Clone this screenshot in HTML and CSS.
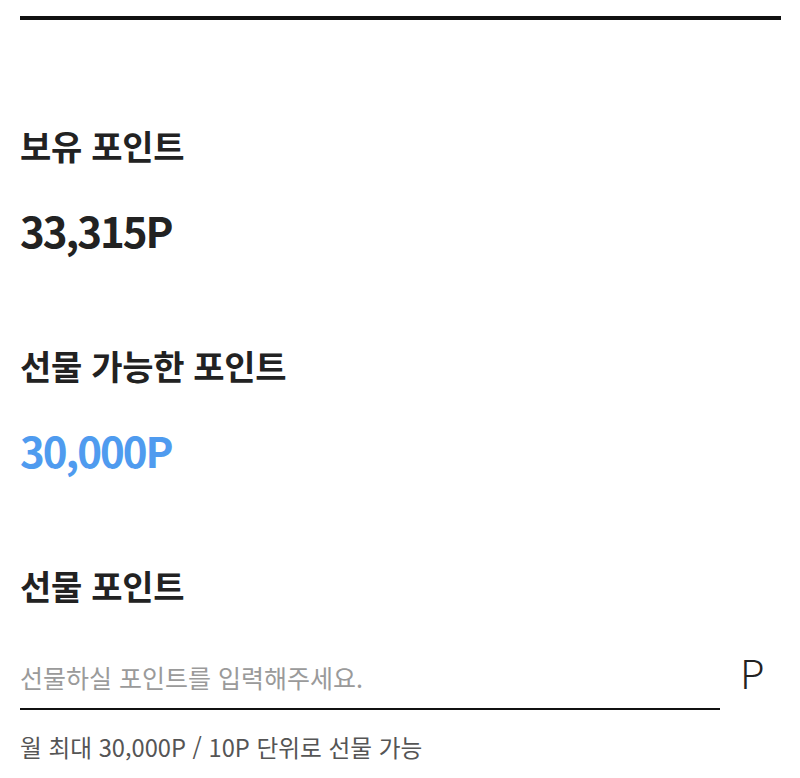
FILE: index.html
```html
<!DOCTYPE html>
<html lang="ko">
<head>
<meta charset="utf-8">
<link rel="stylesheet" href="styles.css">
</head>
<body>
<div class="page">
  <div class="top-rule"></div>
  <h2 class="label label-first">보유 포인트</h2>
  <div class="amount">33,315P</div>
  <h2 class="label">선물 가능한 포인트</h2>
  <div class="amount amount-blue">30,000P</div>
  <h2 class="label">선물 포인트</h2>
  <div class="input-row">
    <div class="field">
      <input class="field-input" type="text" placeholder="선물하실 포인트를 입력해주세요.">
    </div>
    <span class="unit">P</span>
  </div>
  <p class="hint">월 최대 30,000P / 10P 단위로 선물 가능</p>
</div>
</body>
</html>
```
FILE: styles.css
```css
html, body {
  margin: 0;
  padding: 0;
  background: #ffffff;
}
body {
  font-family: "Noto Sans CJK KR", "Noto Sans", sans-serif;
  color: #222222;
}
.page {
  padding: 16px 19px 0 20px;
}
.top-rule {
  height: 4px;
  background: #111111;
}
.label {
  margin: 92px 0 0;
  font-size: 34px;
  line-height: 40px;
  font-weight: 700;
  color: #222222;
  letter-spacing: -0.3px;
}
.label-first {
  margin-top: 106px;
}
.amount {
  margin-top: 40px;
  font-size: 42px;
  line-height: 48px;
  font-weight: 700;
  color: #222222;
  letter-spacing: -2px;
}
.amount-blue {
  color: #4f9bef;
}
.input-row {
  margin-top: 50px;
  display: flex;
  align-items: flex-start;
}
.field {
  flex: 0 0 700px;
  border-bottom: 2px solid #111111;
}
.field-input {
  display: block;
  width: 100%;
  height: 52px;
  box-sizing: border-box;
  border: 0;
  outline: none;
  padding: 0 0 10px;
  background: transparent;
  font-family: "Noto Sans CJK KR", "Noto Sans", sans-serif;
  font-size: 25px;
  color: #222222;
}
.field-input::placeholder {
  color: #9a9a9a;
}
.unit {
  margin: 2px 0 0 20px;
  font-size: 40px;
  font-weight: 300;
  color: #222222;
  line-height: 28px;
}
.hint {
  margin: 22px 0 0;
  font-size: 23.7px;
  line-height: 30px;
  color: #555555;
}
```
